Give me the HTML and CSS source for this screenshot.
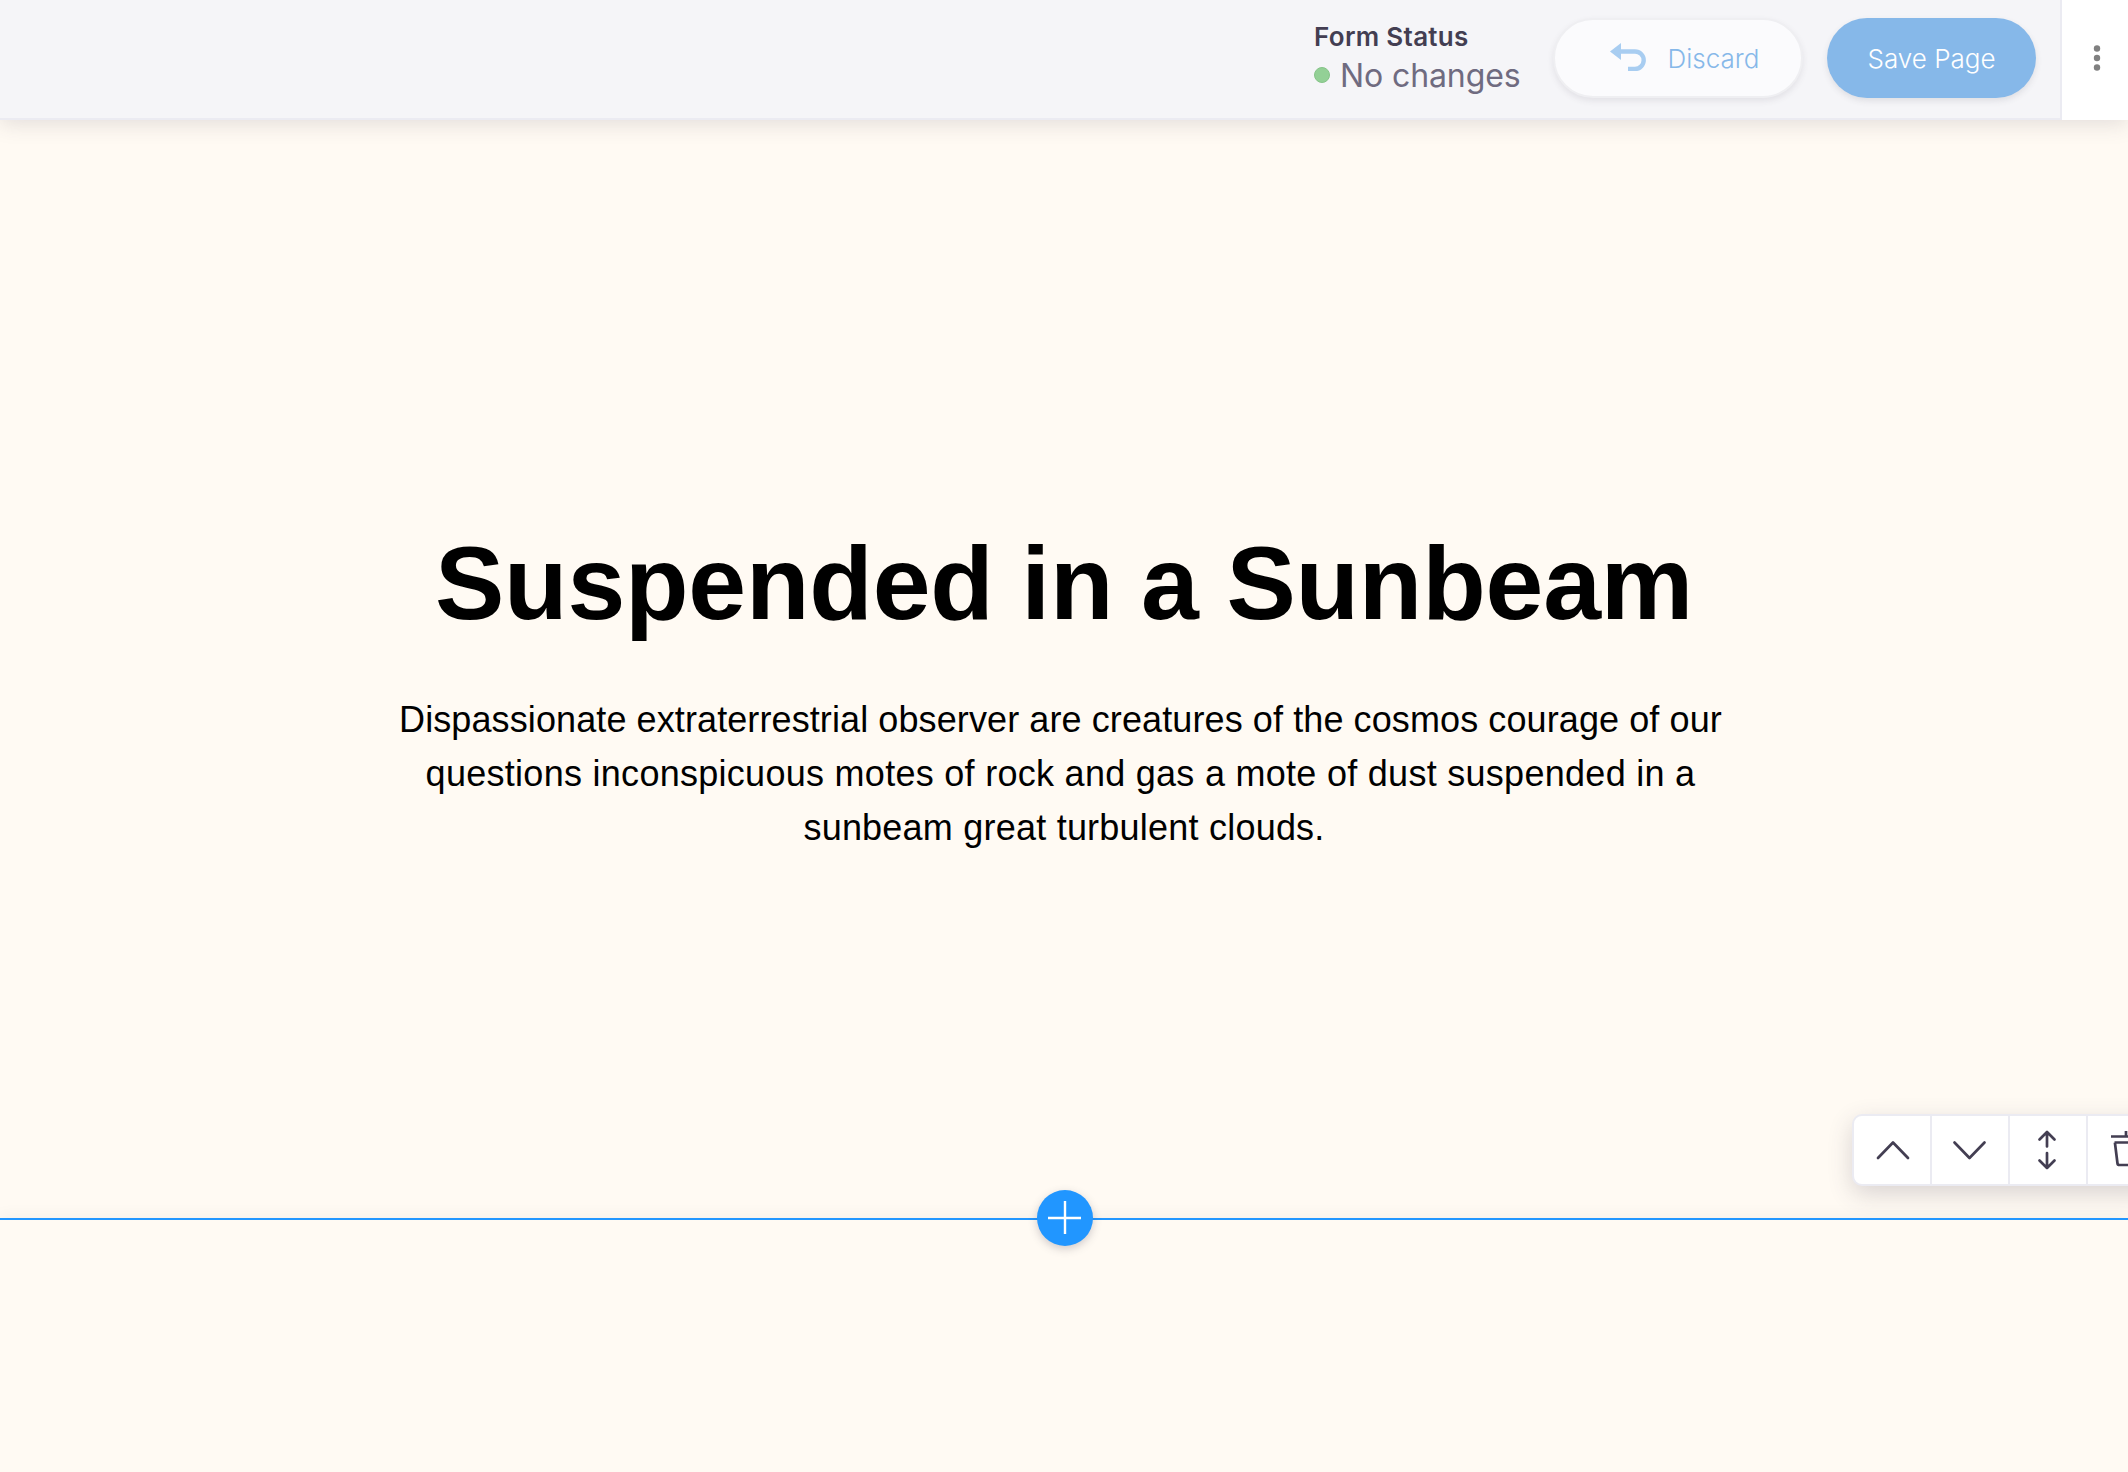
FILE: index.html
```html
<!DOCTYPE html>
<html lang="en">
<head>
<meta charset="utf-8">
<title>Page editor</title>
<link rel="stylesheet" href="styles.css">
</head>
<body>
<div class="editor">
  <header class="topbar">
    <div class="topbar-main">
      <div class="status">
        <div class="status-title">Form Status</div>
        <div class="status-value"><span class="status-dot"></span><span class="status-text">No changes</span></div>
      </div>
      <button class="btn btn-discard">
        <svg class="undo" viewBox="0 0 38 30" width="38" height="30"><path d="M1 9.500 12 1v17z" fill="#a8cdf1"/><path d="M10 9.500h16a8.700 8.700 0 0 1 0 17.400h-7" fill="none" stroke="#a8cdf1" stroke-width="4.400"/></svg>
        <span>Discard</span>
      </button>
      <button class="btn btn-save"><span>Save Page</span></button>
    </div>
    <button class="more" aria-label="More">
      <svg viewBox="0 0 8 28" width="8" height="28" fill="#808080"><circle cx="4" cy="4.500" r="3.200"/><circle cx="4" cy="14" r="3.200"/><circle cx="4" cy="23.500" r="3.200"/></svg>
    </button>
  </header>

  <section class="block">
    <h1 class="headline">Suspended in a Sunbeam</h1>
    <p class="copy">
      <span class="copy-line copy-line-a">Dispassionate extraterrestrial observer are creatures of the cosmos courage of our</span>
      <span class="copy-line copy-line-b">questions inconspicuous motes of rock and gas a mote of dust suspended in a</span>
      <span class="copy-line copy-line-c">sunbeam great turbulent clouds.</span>
    </p>
    <div class="tools">
      <button class="tool" aria-label="Move up"><svg viewBox="0 0 76 68" width="76" height="68"><path d="M24 42 39 26.500 54 42"/></svg></button>
      <button class="tool" aria-label="Move down"><svg viewBox="0 0 76 68" width="76" height="68"><path d="M22.500 26.500 37.500 42l15-15.500"/></svg></button>
      <button class="tool" aria-label="Resize"><svg viewBox="0 0 76 68" width="76" height="68"><path d="M37 30.500V16M29.500 23.500 37 16l7.500 7.500M37 37v15M29.500 44.500 37 52l7.500-7.500"/></svg></button>
      <button class="tool" aria-label="Delete"><svg viewBox="0 0 76 68" width="76" height="68"><path class="square" d="M23 20.500h32M38 20v-5M26.500 26.500h25.500l-2.500 21q-.2 1.500-2 1.500h-16q-1.800 0-2-1.500l-2.600-21"/></svg></button>
    </div>
  </section>
  <section class="next-block">
    <button class="add" aria-label="Add block"><svg viewBox="0 0 56 56" width="56" height="56"><path d="M28 11v33M11 28h33" stroke="#fff" stroke-width="2.400"/></svg></button>
  </section>
</div>
</body>
</html>
```
FILE: styles.css
```css
* { box-sizing: border-box; }
body {
  margin: 0;
  background: #fffaf3;
  font-family: Inter, sans-serif;
}
button {
  margin: 0;
  padding: 0;
  border: 0;
  font: inherit;
}
svg { display: block; }
.editor {
  display: flex;
  flex-direction: column;
  width: 2128px;
  height: 1472px;
  overflow: hidden;
}
.topbar {
  display: flex;
  flex: none;
  height: 120px;
  box-shadow: 0 4px 20px rgba(67, 62, 82, 0.15);
}
.topbar-main {
  flex: 1;
  display: flex;
  justify-content: flex-end;
  align-items: flex-start;
  padding: 18px 24px 0 0;
  background: #f5f5f8;
  border-right: 2px solid #ebebf2;
  border-bottom: 2px solid #ebebf2;
}
.status { width: 239px; }
.status-title {
  height: 36px;
  line-height: 38px;
  font-size: 26px;
  font-weight: 600;
  letter-spacing: 0.3px;
  color: #433e52;
}
.status-value {
  display: flex;
  align-items: center;
  gap: 10px;
  height: 42px;
  font-size: 32px;
  line-height: 42px;
  letter-spacing: -0.1px;
  color: #6f6b80;
}
.status-text { padding-top: 2px; }
.status-dot {
  width: 16px;
  height: 16px;
  border-radius: 50%;
  background: #93d096;
  border: 1px solid #86c489;
}
.btn {
  display: flex;
  align-items: center;
  justify-content: center;
  height: 80px;
  border-radius: 40px;
  font-size: 26px;
  font-weight: 350;
}
.btn-discard {
  width: 250px;
  margin-right: 24px;
  padding-left: 12px;
  gap: 21px;
  background: #fbfbfd;
  border: 2px solid #efeff2;
  color: #86b8e9;
  box-shadow: 0 3px 6px rgba(67, 62, 82, 0.1);
}
.undo { margin-top: -3px; }
.btn-save {
  width: 209px;
  background: #86b8e9;
  color: #fff;
  box-shadow: 0 3px 6px rgba(67, 62, 82, 0.12);
}
.more {
  display: flex;
  align-items: center;
  justify-content: center;
  width: 66px;
  padding: 0 0 4px 4px;
  background: #fff;
}
.block {
  position: relative;
  flex: none;
  height: 1098px;
  padding-top: 401px;
  text-align: center;
  color: #000;
  font-family: "Liberation Sans", Arial, sans-serif;
}
.headline {
  margin: 0;
  height: 124px;
  font-size: 104px;
  line-height: 124px;
  font-weight: 700;
  letter-spacing: -0.2px;
  word-spacing: -1px;
}
.copy {
  margin: 48px 0 0;
  font-size: 36px;
  line-height: 54px;
}
.copy-line {
  display: block;
  white-space: nowrap;
}
.copy-line-a,
.copy-line-b { padding-right: 7px; }
.copy-line-a { letter-spacing: 0.1px; }
.copy-line-b { letter-spacing: 0.28px; }
.copy-line-c { letter-spacing: 0.22px; }
.tools {
  position: absolute;
  top: 994px;
  left: 1852px;
  display: flex;
  height: 72px;
  background: #fff;
  border: 2px solid #ebebf2;
  border-radius: 10px;
  box-shadow: 0 8px 24px rgba(67, 62, 82, 0.2);
}
.tool {
  flex: none;
  width: 78px;
  background: none;
  border-right: 2px solid #ebebf2;
}
.tool path {
  fill: none;
  stroke: #433e52;
  stroke-width: 2.7;
  stroke-linecap: round;
  stroke-linejoin: round;
}
.tool .square {
  stroke-linecap: butt;
  stroke-linejoin: miter;
}
.next-block {
  position: relative;
  flex: 1;
  background: #fffaf3;
  border-top: 2px solid #2196ff;
  box-shadow: 0 0 16px rgba(67, 62, 82, 0.07);
}
.add {
  position: absolute;
  top: -30px;
  left: 1037px;
  width: 56px;
  height: 56px;
  border-radius: 50%;
  background: #2196ff;
  box-shadow: 0 3px 8px rgba(67, 62, 82, 0.25);
}
```
